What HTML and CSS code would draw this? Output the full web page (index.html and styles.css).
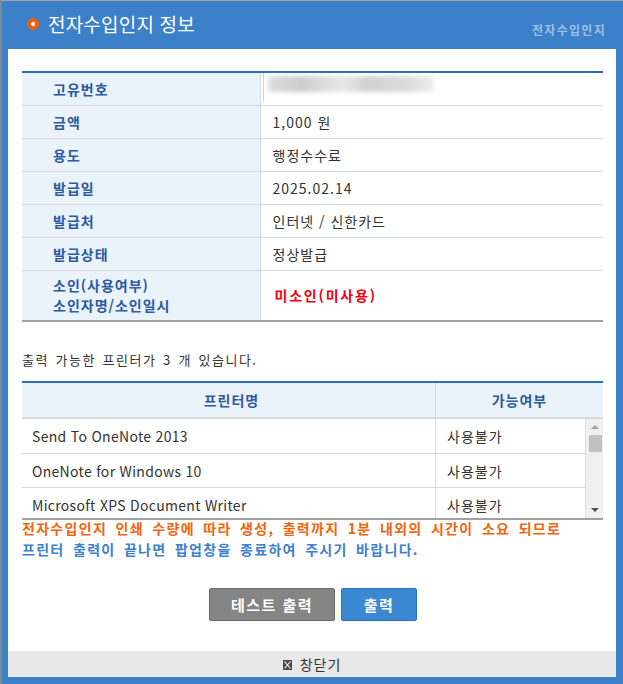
FILE: index.html
```html
<!DOCTYPE html>
<html lang="ko">
<head>
<meta charset="utf-8">
<title>전자수입인지 정보</title>
<link rel="stylesheet" href="styles.css">
</head>
<body>
<div class="window">
  <div class="header">
    <div class="title">
      <span class="dot"></span>
      <span class="title-text">전자수입인지 정보</span>
    </div>
    <div class="brand">전자수입인지</div>
  </div>
  <div class="panel">
    <div class="content">
      <table class="info">
        <tr class="first">
          <th>고유번호</th>
          <td><div class="masked"><span class="blur"></span></div></td>
        </tr>
        <tr><th>금액</th><td>1,000 원</td></tr>
        <tr><th>용도</th><td>행정수수료</td></tr>
        <tr><th>발급일</th><td>2025.02.14</td></tr>
        <tr><th>발급처</th><td>인터넷 / 신한카드</td></tr>
        <tr><th>발급상태</th><td>정상발급</td></tr>
        <tr class="last"><th>소인(사용여부)<br>소인자명/소인일시</th><td class="red">미소인(미사용)</td></tr>
      </table>

      <p class="count">출력 가능한 프린터가 3 개 있습니다.</p>

      <div class="printers">
        <div class="p-head">
          <div class="p-name">프린터명</div>
          <div class="p-state">가능여부</div>
        </div>
        <div class="p-body">
          <div class="p-rows">
            <div class="p-row"><div class="p-name">Send To OneNote 2013</div><div class="p-state">사용불가</div></div>
            <div class="p-row"><div class="p-name">OneNote for Windows 10</div><div class="p-state">사용불가</div></div>
            <div class="p-row"><div class="p-name">Microsoft XPS Document Writer</div><div class="p-state">사용불가</div></div>
          </div>
          <div class="scrollbar">
            <span class="arrow up"></span>
            <span class="thumb"></span>
            <span class="arrow down"></span>
          </div>
        </div>
      </div>

      <p class="notice orange">전자수입인지 인쇄 수량에 따라 생성, 출력까지 1분 내외의 시간이 소요 되므로</p>
      <p class="notice blue">프린터 출력이 끝나면 팝업창을 종료하여 주시기 바랍니다.</p>

      <div class="buttons">
        <button class="btn gray">테스트 출력</button>
        <button class="btn primary">출력</button>
      </div>
    </div>
    <div class="footer">
      <span class="close-icon"><svg width="9" height="10" viewBox="0 0 9 10"><rect x="0" y="0" width="9" height="10" fill="#4a4a4a"/><path d="M1.5 1.5 L7.5 8.5 M7.5 1.5 L1.5 8.5" stroke="#fff" stroke-width="1.1"/></svg></span>
      <span class="close-text">창닫기</span>
    </div>
  </div>
</div>
</body>
</html>
```

FILE: styles.css
```css
* { box-sizing: border-box; }
html, body { margin: 0; padding: 0; }
body {
  font-family: "Noto Sans CJK KR", "Noto Sans", sans-serif;
  color: #333;
  background: #fff;
}
.window {
  width: 623px;
  height: 684px;
  background: #3c80c9;
  border-top: 1px solid #a9a9a9;
  border-left: 2px solid #7d8894;
  padding: 0 7px 7px 6px;
  display: flex;
  flex-direction: column;
}
.header {
  height: 48px;
  display: flex;
  align-items: center;
  justify-content: space-between;
  padding-left: 19px;
}
.title { display: flex; align-items: center; gap: 9px; margin-top: -2px; }
.dot {
  width: 12px; height: 12px; border-radius: 50%;
  background: #e9620e;
  position: relative;
  display: inline-block;
}
.dot::after {
  content: ""; position: absolute; left: 4px; top: 4px;
  width: 4px; height: 4px; border-radius: 50%; background: #fff;
}
.title-text { color: #fff; font-size: 19px; line-height: 24px; letter-spacing: 0.2px; }
.brand {
  color: #9fbfe6; font-size: 12px; font-weight: bold; margin-top: 9px;
  margin-right: 10px; letter-spacing: 1.3px;
}
.panel {
  flex: 1;
  background: #fff;
  display: flex;
  flex-direction: column;
}
.content { flex: 1; padding: 22px 13px 0 14px; }

.info {
  width: 100%;
  border-collapse: collapse;
  border-top: 2px solid #2a6dbb;
  border-bottom: 2px solid #a0a0a0;
  font-size: 14px;
}
.info th {
  width: 238px;
  background: #e9f3f9;
  color: #2c5aa3;
  font-weight: bold;
  text-align: left;
  padding: 0 0 0 31px;
  height: 33px;
  border-bottom: 1px solid #d5dadf;
  border-right: 1px solid #d5dadf;
  line-height: 20px;
  letter-spacing: 1px;
}
.info td {
  padding: 0 0 0 12px;
  height: 33px;
  border-bottom: 1px solid #d5dadf;
  color: #333;
  letter-spacing: 1px;
}
.info tr.first th, .info tr.first td { height: 33px; }
.info tr.last th, .info tr.last td { height: 51px; border-bottom: none; }
.info td.red { color: #f0000f; font-weight: bold; padding-left: 14px; letter-spacing: 1.8px; }
.masked {
  height: 29px;
  margin-left: -10px;
  border-left: 1px solid #cfcfcf;
  padding: 3px 0 0 4px;
  margin-top: -2px;
}
.blur {
  display: block;
  width: 166px;
  height: 16px;
  background: linear-gradient(90deg, #dadada 0%, #c8c8c8 20%, #e6e6e6 45%, #cdcdcd 60%, #d8d8d8 85%, #eeeeee 100%);
  filter: blur(2px);
  opacity: 0.9;
}

.count { margin: 29px 0 0; font-size: 13px; line-height: 18px; word-spacing: 1.5px; letter-spacing: 1.5px; }

.printers {
  margin-top: 12px;
  border-top: 2px solid #2a6dbb;
  border-bottom: 2px solid #a0a0a0;
  font-size: 14px;
}
.p-head {
  display: flex;
  height: 36px;
  background: #eaf3fa;
  border-bottom: 2px solid #d5dadf;
  color: #2c5aa3;
  font-weight: bold;
  letter-spacing: 1px;
}
.p-head .p-name {
  flex: 1; display: flex; align-items: center; justify-content: center;
  border-right: 1px solid #d5dadf; padding-left: 6px;
}
.p-head .p-state {
  width: 167px; display: flex; align-items: center; justify-content: center; padding-right: 0;
}
.p-body { display: flex; height: 99px; overflow: hidden; }
.p-rows { flex: 1; }
.p-row {
  display: flex;
  height: 34px;
  border-bottom: 1px solid #d8d8d8;
}
.p-row:first-child { height: 35px; }
.p-row .p-name { flex: 1; padding-left: 10px; display: flex; align-items: center; border-right: 1px solid #d8d8d8; letter-spacing: 0.3px; }
.p-row .p-state { width: 149px; padding-left: 11px; display: flex; align-items: center; letter-spacing: 1px; }
.p-row:last-child { border-bottom: none; }
.scrollbar {
  width: 18px;
  background: #f0f0f0;
  border-left: 1px solid #dedede;
  position: relative;
}
.thumb {
  position: absolute; left: 3px; top: 16px; width: 13px; height: 17px; background: #c1c1c1;
}
.arrow { position: absolute; left: 5px; width: 0; height: 0; border-left: 4px solid transparent; border-right: 4px solid transparent; }
.arrow.up { top: 6px; border-bottom: 4px solid #a3a3a3; }
.arrow.down { bottom: 6px; border-top: 4px solid #505050; }

.notice { margin: 0; font-size: 14px; font-weight: bold; line-height: 21px; word-spacing: 3.2px; letter-spacing: 1.3px; white-space: nowrap; }
.notice.orange { color: #f4640c; margin-top: -2px; }
.notice.blue { color: #3d80d0; }

.buttons { display: flex; justify-content: center; gap: 6px; margin-top: 28px; padding-left: 1px; }
.btn {
  font-family: "Noto Sans CJK KR", "Noto Sans", sans-serif;
  font-size: 15px; font-weight: bold; color: #fff;
  height: 33px; padding: 0; cursor: pointer;
  border-radius: 2px;
  letter-spacing: 1.5px;
}
.btn.gray { width: 126px; background: #858585; border: 1px solid #6a6a6a; }
.btn.primary { width: 76px; background: #3a88d2; border: 1px solid #2b6fbd; }

.footer {
  height: 26px;
  background: #e8e8e8;
  display: flex;
  align-items: center;
  justify-content: center;
  gap: 8px;
  font-size: 14px;
  color: #333;
}
.close-icon { display: flex; padding-top: 1px; }
.close-text { line-height: 20px; letter-spacing: 1px; }
```
